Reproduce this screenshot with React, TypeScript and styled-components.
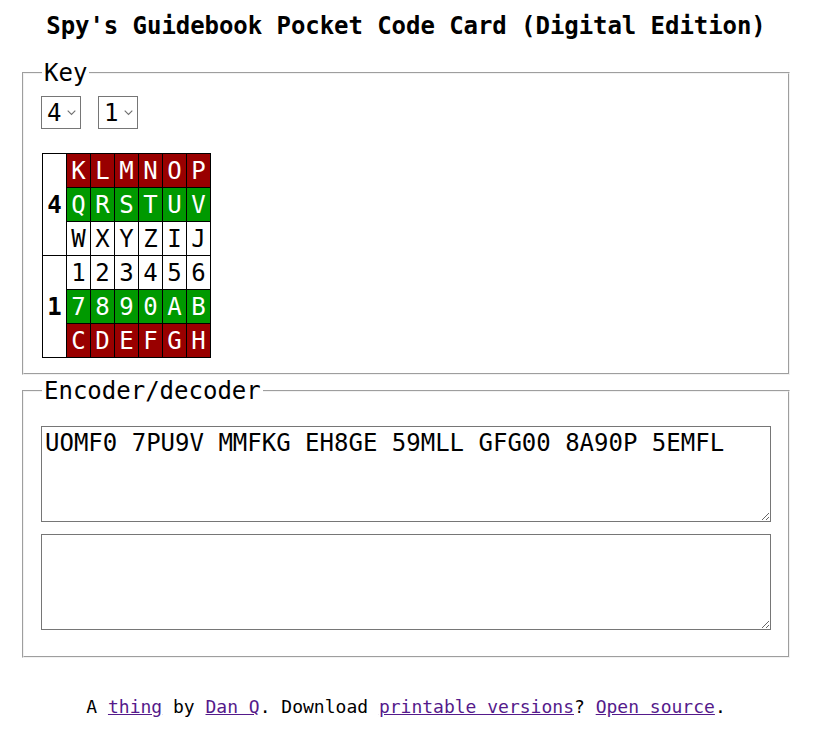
import styled, { createGlobalStyle } from "styled-components";

const GlobalStyle = createGlobalStyle`
  html, body {
    margin: 0;
    padding: 0;
    background: #fff;
  }
  body {
    font-family: "DejaVu Sans Mono", "Liberation Mono", monospace;
    font-size: 24px;
    color: #000;
  }
`;

type Tone = "red" | "green" | "white";

const keyRows: { group: string; rows: { tone: Tone; cells: string[] }[] }[] = [
  {
    group: "4",
    rows: [
      { tone: "red", cells: ["K", "L", "M", "N", "O", "P"] },
      { tone: "green", cells: ["Q", "R", "S", "T", "U", "V"] },
      { tone: "white", cells: ["W", "X", "Y", "Z", "I", "J"] },
    ],
  },
  {
    group: "1",
    rows: [
      { tone: "white", cells: ["1", "2", "3", "4", "5", "6"] },
      { tone: "green", cells: ["7", "8", "9", "0", "A", "B"] },
      { tone: "red", cells: ["C", "D", "E", "F", "G", "H"] },
    ],
  },
];

const toneBg: Record<Tone, string> = {
  red: "#990000",
  green: "#009900",
  white: "#ffffff",
};

function Chevron() {
  return (
    <ChevronIcon width="9" height="6" viewBox="0 0 9 6" aria-hidden>
      <polyline points="0.7,0.7 4.5,4.5 8.3,0.7" fill="none" stroke="#707070" strokeWidth="1.1" />
    </ChevronIcon>
  );
}

function KeySelect({ value }: { value: string }) {
  return (
    <SelectWrap>
      <Select defaultValue={value}>
        {["1", "2", "3", "4", "5", "6"].map((n) => (
          <option key={n} value={n}>
            {n}
          </option>
        ))}
      </Select>
      <Chevron />
    </SelectWrap>
  );
}

export default function App() {
  return (
    <Page>
      <GlobalStyle />
      <Title>Spy's Guidebook Pocket Code Card (Digital Edition)</Title>

      <Panel>
        <Legend>Key</Legend>
        <SelectRow>
          <KeySelect value="4" />
          <KeySelect value="1" />
        </SelectRow>

        <KeyTable>
          <tbody>
            {keyRows.map((g) =>
              g.rows.map((r, i) => (
                <tr key={g.group + i}>
                  {i === 0 && <GroupCell rowSpan={3}>{g.group}</GroupCell>}
                  {r.cells.map((c) => (
                    <Cell key={c} $tone={r.tone}>
                      {c}
                    </Cell>
                  ))}
                </tr>
              ))
            )}
          </tbody>
        </KeyTable>
      </Panel>

      <Panel $spaced>
        <Legend>Encoder/decoder</Legend>
        <Boxes>
          <TextBox defaultValue="UOMF0 7PU9V MMFKG EH8GE 59MLL GFG00 8A90P 5EMFL" />
          <TextBox defaultValue="" />
        </Boxes>
      </Panel>

      <Footer>
        A <Link href="#">thing</Link> by <Link href="#">Dan Q</Link>. Download{" "}
        <Link href="#">printable versions</Link>? <Link href="#">Open source</Link>.
      </Footer>
    </Page>
  );
}

const Page = styled.div`
  padding: 0 23px 0 22px;
`;

const Title = styled.h1`
  font-size: 24px;
  line-height: 28px;
  font-weight: bold;
  letter-spacing: -0.06px;
  text-align: center;
  margin: 12px 0 19px;
`;

const Panel = styled.fieldset<{ $spaced?: boolean }>`
  margin: ${(p) => (p.$spaced ? "2px" : "0")} 0 0;
  border: 2px groove #f2f2f2;
  padding: 8px 18px 15px;
  min-width: 0;
`;

const Legend = styled.legend`
  font-size: 24px;
  line-height: 28px;
  padding: 0 2px;
`;

const SelectRow = styled.div`
  display: flex;
  gap: 17px;
  margin-top: 1px;
  margin-left: -1px;
`;

const SelectWrap = styled.span`
  position: relative;
  display: inline-flex;
`;

const Select = styled.select`
  appearance: none;
  -webkit-appearance: none;
  font-family: "DejaVu Sans Mono", monospace;
  font-size: 24px;
  line-height: 28px;
  height: 33px;
  width: 40px;
  padding: 0 0 0 5px;
  border: 1px solid #767676;
  border-radius: 0;
  background: #fff;
  color: #000;
`;

const ChevronIcon = styled.svg`
  position: absolute;
  right: 5px;
  top: 14px;
  pointer-events: none;
`;

const KeyTable = styled.table`
  border-collapse: collapse;
  margin-top: 24px;
  border: 1px solid #000;
`;

const GroupCell = styled.th`
  width: 23px;
  padding: 0;
  border: 1px solid #000;
  font-weight: bold;
  font-size: 24px;
  text-align: center;
  vertical-align: middle;
  background: #fff;
`;

const Cell = styled.td<{ $tone: Tone }>`
  width: 23px;
  height: 33px;
  padding: 0;
  border: 1px solid #000;
  text-align: center;
  vertical-align: middle;
  font-size: 24px;
  line-height: 28px;
  background: ${(p) => toneBg[p.$tone]};
  color: ${(p) => (p.$tone === "white" ? "#000" : "#fff")};
`;

const Boxes = styled.div`
  display: flex;
  flex-direction: column;
  gap: 12px;
  margin: 13px -1px 11px -1px;
`;

const TextBox = styled.textarea`
  box-sizing: border-box;
  width: 100%;
  height: 96px;
  margin: 0;
  padding: 2px 3px;
  font-family: "DejaVu Sans Mono", monospace;
  font-size: 24px;
  line-height: 28px;
  border: 1px solid #767676;
  color: #000;
  background: #fff;
`;

const Footer = styled.p`
  margin: 38px 0 0;
  text-align: center;
  font-size: 18px;
  line-height: 21px;
`;

const Link = styled.a`
  color: #551a8b;
  text-decoration: underline;
`;
